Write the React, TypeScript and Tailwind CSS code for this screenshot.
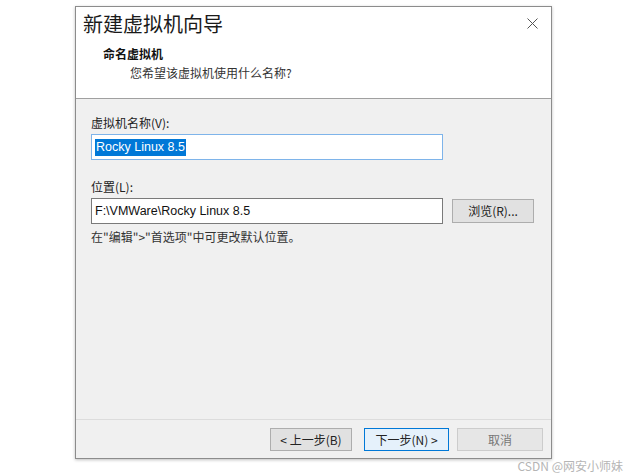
export default function App() {
  const cjk = { fontFamily: '"Noto Sans CJK SC", "Noto Sans", sans-serif' };
  const latin = { fontFamily: '"Liberation Sans", "Noto Sans", sans-serif' };
  return (
    <div
      className="relative h-[475px] w-[627px] overflow-hidden bg-white"
      style={cjk}
    >
      <div className="ml-[75px] mt-[6px] flex h-[453px] w-[477px] flex-col border border-[#8c8c8c] bg-white shadow-[0_1px_3px_rgba(0,0,0,0.25)]">
        {/* header */}
        <div className="relative h-[91px] shrink-0 bg-white">
          <div className="pl-[7px] pt-[3px] text-[20px] leading-[28px] text-[#1a1a1a]">
            新建虚拟机向导
          </div>
          <button className="absolute right-[12px] top-[9px] flex h-[14px] w-[14px] items-center justify-center">
            <svg width="11" height="11" viewBox="0 0 11 11">
              <path d="M0.5 0.5L10.5 10.5M10.5 0.5L0.5 10.5" stroke="#555" strokeWidth="1" />
            </svg>
          </button>
          <div className="pl-[27px] pt-[8px] text-[12px] font-bold leading-[16px] text-[#111]">
            命名虚拟机
          </div>
          <div className="pl-[54px] pt-[3px] text-[12px] leading-[16px] text-[#333]">
            您希望该虚拟机使用什么名称?
          </div>
        </div>

        {/* body */}
        <div className="flex-1 border-t border-[#a0a0a0] bg-[#f0f0f0] pl-[15px] pt-[16px]">
          <div className="text-[12px] leading-[16px] text-[#222]">虚拟机名称(V):</div>
          <div className="mt-[3px] flex h-[26px] w-[352px] items-center border border-[#7eb4ea] bg-white pl-[3px]">
            <span
              className="bg-[#0078d7] px-[1px] text-[12.5px] leading-[17px] text-white"
              style={latin}
            >
              Rocky Linux 8.5
            </span>
          </div>

          <div className="mt-[19px] text-[12px] leading-[16px] text-[#222]">位置(L):</div>
          <div className="mt-[3px] flex items-center">
            <div
              className="flex h-[26px] w-[352px] items-center border border-[#7a7a7a] bg-white pl-[3px] text-[12.5px] text-[#111]"
              style={latin}
            >
              F:\VMWare\Rocky Linux 8.5
            </div>
            <button className="ml-[9px] h-[24px] w-[82px] border border-[#adadad] bg-[#e1e1e1] text-[12px] text-[#222]">
              浏览(R)...
            </button>
          </div>
          <div className="mt-[5px] text-[12px] leading-[16px] text-[#333]">
            在"编辑"&gt;"首选项"中可更改默认位置。
          </div>
        </div>

        {/* footer */}
        <div className="flex h-[39px] shrink-0 items-start justify-end border-t border-[#dcdcdc] bg-[#f0f0f0] pr-[8px] pt-[8px]">
          <button className="h-[23px] w-[82px] border border-[#adadad] bg-[#e1e1e1] text-[12px] leading-[20px] text-[#222]">
            &lt; 上一步(B)
          </button>
          <button className="ml-[12px] h-[23px] w-[85px] border border-[#0078d7] bg-[#e5f1fb] text-[12px] leading-[20px] text-[#222]">
            下一步(N) &gt;
          </button>
          <button className="ml-[8px] h-[23px] w-[86px] border border-[#cccccc] bg-[#e6e6e6] text-[12px] leading-[20px] text-[#777]">
            取消
          </button>
        </div>
      </div>

      <div className="absolute bottom-[2px] right-[4px] text-[12px] leading-[14px] text-[#b5b5b5]">
        CSDN @网安小师妹
      </div>
    </div>
  );
}
